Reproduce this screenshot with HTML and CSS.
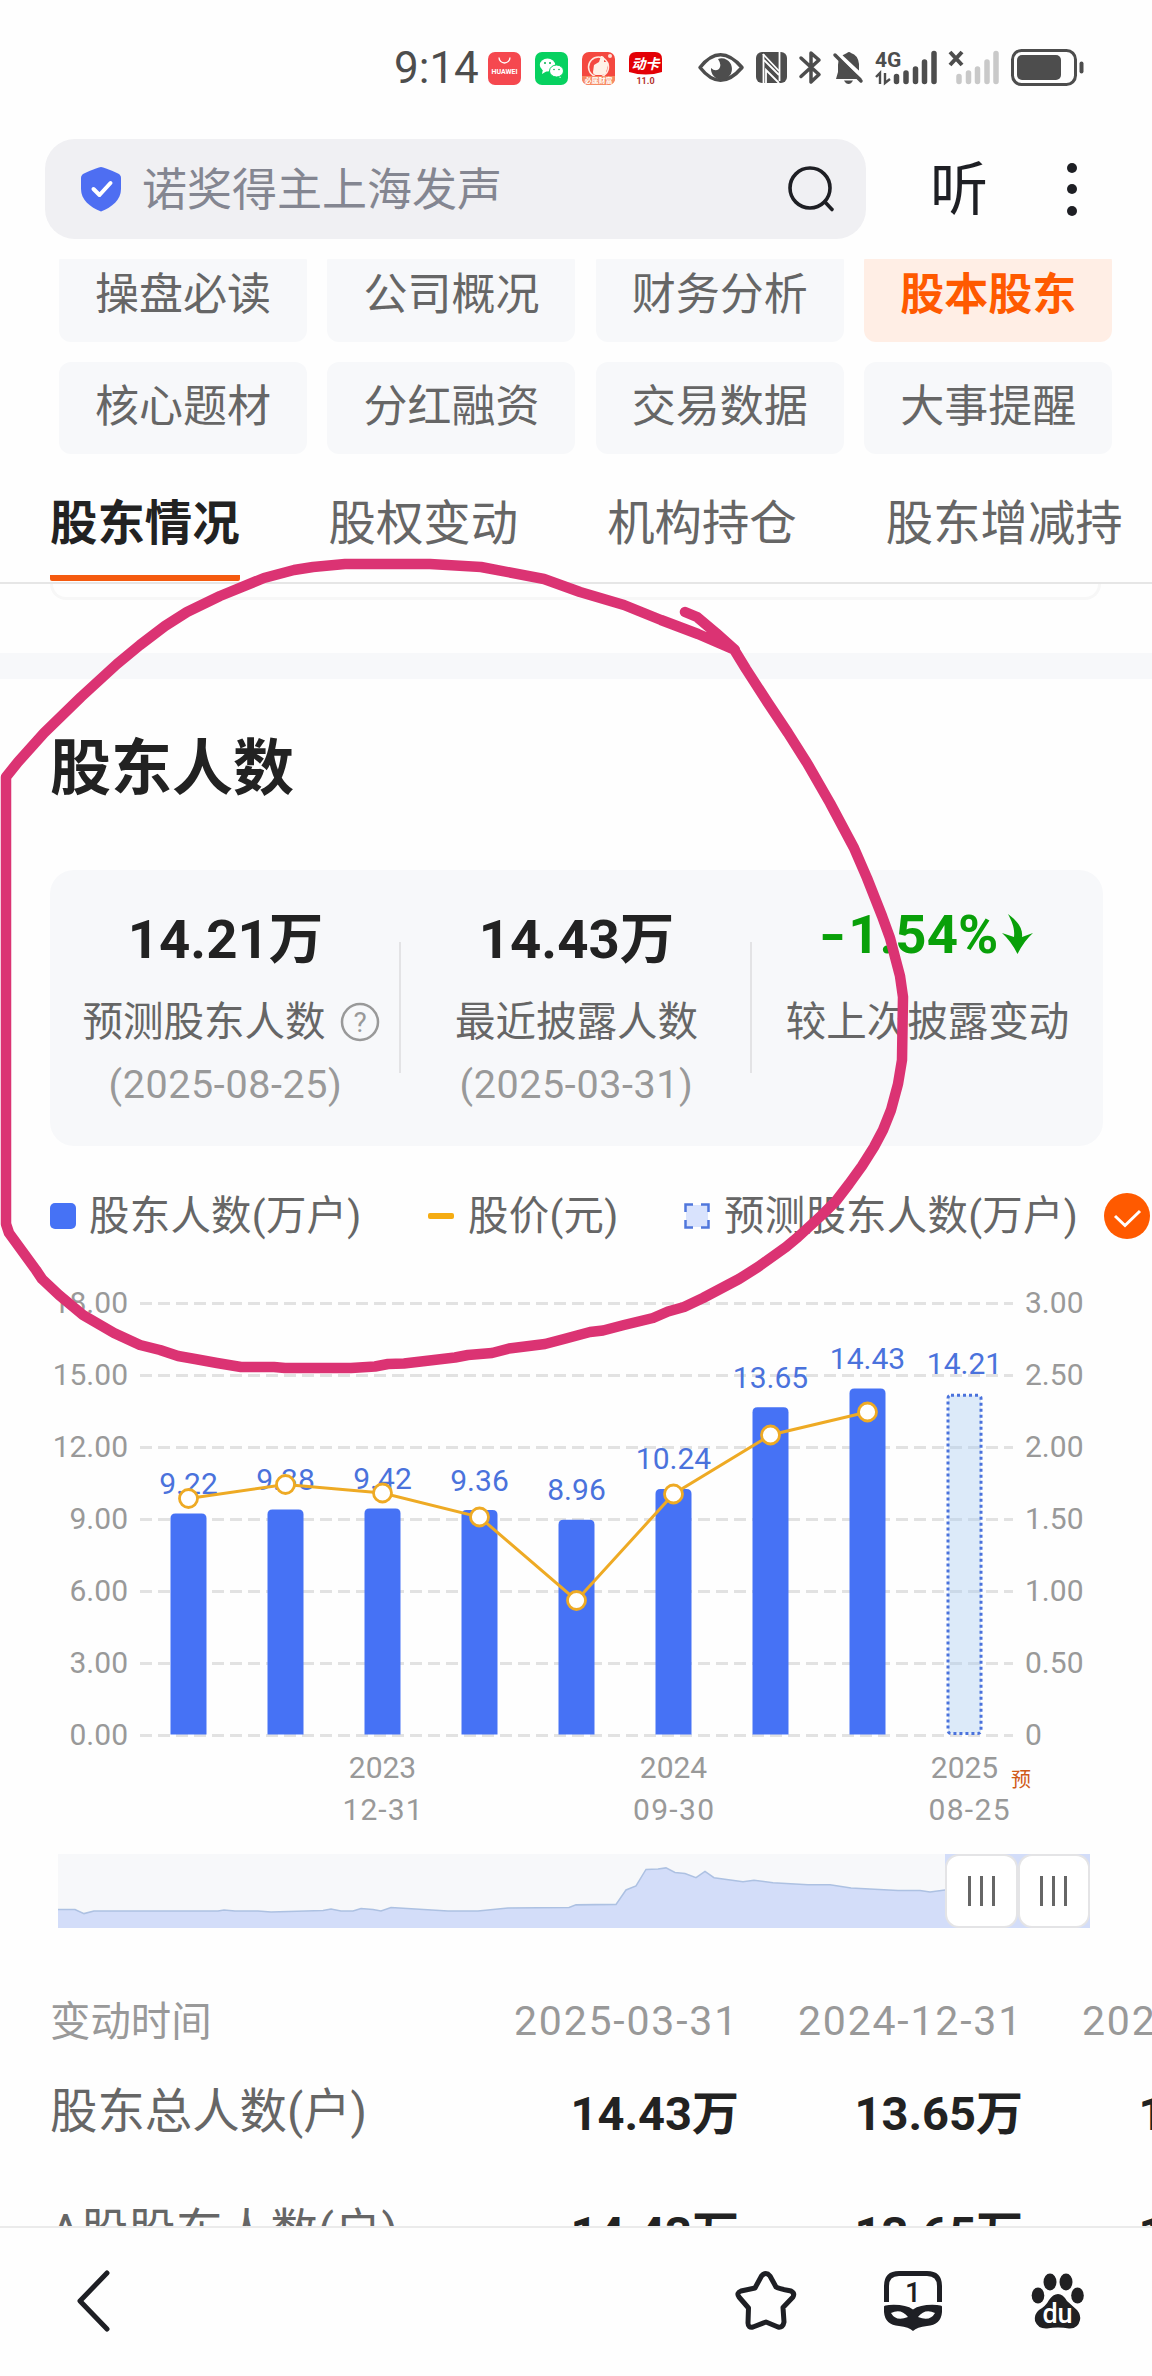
FILE: index.html
```html
<!DOCTYPE html>
<html lang="zh-CN">
<head>
    <meta charset="UTF-8">
    <meta name="viewport" content="width=device-width, initial-scale=1.0">
    <title>股东人数</title>
    <link rel="stylesheet" href="styles.css">
</head>
<body>
    <!-- Status bar -->
    <div class="status-bar">
        <span class="time">9:14</span>
        <svg class="app-icons" viewBox="484 44 184 50" width="184" height="50">
            <rect x="488" y="52" width="33" height="33" rx="7" fill="#f5484f"/>
            <path d="M499 57.500a5.500 5.500 0 0 0 11 0" fill="none" stroke="#fff" stroke-width="1.300"/>
            <text x="504.500" y="73.500" class="app-text" textLength="26">HUAWEI</text>
            <rect x="535" y="52" width="33" height="33" rx="7" fill="#07d160"/>
            <ellipse cx="547.500" cy="65" rx="7.700" ry="6.500" fill="#fff"/>
            <path d="M543 69l-1 5 5-3zM559 74l2 4-5-2z" fill="#fff"/>
            <ellipse cx="556.500" cy="71" rx="7" ry="6" fill="#fff" stroke="#07d160"/>
            <g fill="#07b050"><circle cx="545" cy="63" r="1"/><circle cx="550" cy="63" r="1"/><circle cx="554" cy="69.500" r=".8"/><circle cx="559" cy="69.500" r=".8"/></g>
            <rect x="582" y="52" width="33" height="33" rx="7" fill="#f4483f"/>
            <circle cx="598.500" cy="67" r="10" fill="none" stroke="#ffe9df" stroke-width="1.500"/>
            <path d="M594 65l5-3 2-6q4-1 3 6h3q2 0 1 3l-2 8q-1 2-4 2h-6q-3 0-3-3z" fill="#fff0e6"/>
            <path d="M582 76h33v2q0 7-7 7h-19q-7 0-7-7z" fill="#f68a62"/>
            <text x="598.500" y="83" class="app-text">必属财富</text>
            <circle cx="610" cy="56" r="2" fill="#ffe0d5"/>
            <path d="M629 59q0-7 7-7h19q7 0 7 7v13q-16 5-33 0z" fill="#e30006"/>
            <text x="645.500" y="69" class="app-text card">动卡</text>
            <text x="645.500" y="84" class="app-text ver">11.0</text>
        </svg>
        <svg class="sys-icons" viewBox="694 44 396 50" width="396" height="50">
            <path d="M700 67.500Q720 42 742 67.500Q720 93 700 67.500z" fill="none" stroke="#4d4d4d" stroke-width="3.500" stroke-linejoin="round"/>
            <path d="M718 59a10.500 10.500 0 1 1-7 9q4 4 8 1 3-4-1-10z" fill="#4d4d4d"/>
            <rect x="756" y="52" width="31" height="31" rx="6" fill="#4d4d4d"/>
            <path d="M763.500 83V54M779.500 52v29" fill="none" stroke="#fff" stroke-width="1.800"/>
            <path d="M763 54l16 17M764 60l15 15M766 83V70l13 13" fill="none" stroke="#fff" stroke-width="1.800"/>
            <path d="M801 58l18 16.500-8 7.500V53l8 7-18 16.500" fill="none" stroke="#4d4d4d" stroke-width="3.500" stroke-linejoin="round" stroke-linecap="round"/>
            <path d="M836 79h26l-3-6v-9q-1-9-8-11-2-2-4 0-9 3-9 12v7z" fill="#4d4d4d"/>
            <path d="M844 80.500h9q-2 3.500-4.500 3.500t-4.500-3.500z" fill="#4d4d4d"/>
            <path d="M836 52l29 27" stroke="#fff" stroke-width="4"/>
            <path d="M835 55l26 26" stroke="#4d4d4d" stroke-width="3.500" stroke-linecap="round"/>
            <text x="875" y="66.500" class="net">4G</text>
            <path d="M876 77l4-4v11M885 73v10l5-4" fill="none" stroke="#4d4d4d" stroke-width="2.400"/>
            <path d="M896.500 76.500v5M906 73v8.500M915.500 69v12.500M924.500 62v19.500M934 53.500v28" stroke="#4d4d4d" stroke-width="5.500" stroke-linecap="round"/>
            <path d="M950 52l12 13M962 52l-12 13" stroke="#4d4d4d" stroke-width="4"/>
            <path d="M959 76.500v5M968.500 73v8.500M977.500 69v12.500M987 62v19.500M996 53.500v28" stroke="#c9c9c9" stroke-width="5.500" stroke-linecap="round"/>
            <rect x="1012.500" y="50.500" width="63" height="34" rx="9" fill="none" stroke="#4d4d4d" stroke-width="3"/>
            <rect x="1017" y="55" width="44" height="25" rx="5" fill="#4d4d4d"/>
            <rect x="1079.500" y="61.500" width="4" height="12" rx="2" fill="#4d4d4d"/>
        </svg>
    </div>

    <!-- Search -->
    <div class="top-bar">
        <div class="search-box">
            <svg width="42" height="46" viewBox="0 0 42 46"><path d="M21 1Q24 1 38 7.500Q41 9 41 12V23C41 34 32 41 21 45.500C10 41 1 34 1 23V12Q1 9 4 7.500Q18 1 21 1z" fill="#4e6ef2"/><path d="M13.500 23l6 6 11-12" fill="none" stroke="#fff" stroke-width="4" stroke-linecap="round" stroke-linejoin="round"/></svg>
            <span class="search-text">诺奖得主上海发声</span>
            <svg width="48" height="48" viewBox="0 0 48 48" fill="none" stroke="#1e1f24" stroke-width="3.600" stroke-linecap="round"><circle cx="23" cy="23" r="20"/><path d="M38 37l7 7.500"/></svg>
        </div>
        <span class="listen">听</span>
        <div class="dots"><i></i><i></i><i></i></div>
    </div>

    <div class="content">
        <div class="menu-grid">
            <div class="menu-item">操盘必读</div>
            <div class="menu-item">公司概况</div>
            <div class="menu-item">财务分析</div>
            <div class="menu-item active">股本股东</div>
            <div class="menu-item">核心题材</div>
            <div class="menu-item">分红融资</div>
            <div class="menu-item">交易数据</div>
            <div class="menu-item">大事提醒</div>
        </div>

        <div class="tabs">
            <div class="tab active">股东情况</div>
            <div class="tab">股权变动</div>
            <div class="tab">机构持仓</div>
            <div class="tab">股东增减持</div>
        </div>
        <div class="card-end"></div>
        <div class="band"></div>

        <h2 class="section-title">股东人数</h2>

        <div class="summary">
            <div class="summary-item">
                <div class="value">14.21万</div>
                <div class="label with-help"><span>预测股东人数</span>
                    <svg width="40" height="40" viewBox="0 0 40 40"><circle cx="20" cy="20" r="18" fill="none" stroke="#999" stroke-width="2.500"/><text x="20" y="30" class="question">?</text></svg>
                </div>
                <div class="date">(2025-08-25)</div>
            </div>
            <div class="summary-item">
                <div class="value">14.43万</div>
                <div class="label"><span>最近披露人数</span></div>
                <div class="date">(2025-03-31)</div>
            </div>
            <div class="summary-item">
                <div class="value down"><span class="minus">-</span>1.54%<svg width="31" height="40" viewBox="0 0 31 40"><path d="M6 0C17 8 21 16 20 23L31 19Q22 27 15.500 40Q9 27 0 19L12 23C13 14 10 8 6 0z" fill="#09a009"/></svg></div>
                <div class="label"><span>较上次披露变动</span></div>
            </div>
        </div>

        <div class="legend">
            <i class="mark-bar"></i><span class="name-bar">股东人数(万户)</span>
            <i class="mark-line"></i><span class="name-line">股价(元)</span>
            <svg width="26" height="26" viewBox="0 0 26 26"><rect x="2" y="2" width="22" height="22" fill="#d9e3fd"/><path d="M1.500 9V1.500H9M17 1.500h7.500V9M24.500 17v7.500H17M9 24.500H1.500V17" fill="none" stroke="#5077dc" stroke-width="2.500"/></svg>
            <span class="name-pred">预测股东人数(万户)</span>
            <svg width="46" height="46" viewBox="0 0 46 46"><circle cx="23" cy="23" r="23" fill="#ff5a00"/><path d="M11 23l10 9.500 15-14.500" fill="none" stroke="#fff" stroke-width="3"/></svg>
        </div>

        <svg class="chart" viewBox="0 1247 1152 593" width="1152" height="593">
            <g id="grid" class="grid"></g>
            <g id="axis" class="axis"></g>
            <g id="bars"></g>
            <g id="line"></g>
            <g class="axis mid">
                <text x="382.500" y="1778">2023</text><text x="382.500" y="1820" textLength="80">12-31</text>
                <text x="673.500" y="1778">2024</text><text x="673.500" y="1820" textLength="81">09-30</text>
                <text x="964.500" y="1778">2025</text><text x="969" y="1820" textLength="81">08-25</text>
            </g>
            <text x="1011" y="1786.500" class="forecast">预</text>
        </svg>

        <div class="range">
            <svg viewBox="0 0 887 72" width="887" height="74" preserveAspectRatio="none">
                <path class="range-area" d="M-2 54H17L26 58L36 55.500H160L166 54.500L177 55.500H200L213 56.500L265 55L273 53.500L283 55.500H295L303 53L315 54L323 55.500L333 52L390 55.500H420L450 52.500L511 52L518 49.500L558 49L568 35L578 31L588 15L600 14.500L608 13.500L617 18L627 19L638 23L647 17L656 23L685 27L696 25.500L715 28L750 30L772 30L793 33L840 35.500L862 35.500L872 37L887 35H900V74H-2z"/>
            </svg>
            <div class="handle"><i></i><i></i><i></i></div>
            <div class="handle"><i></i><i></i><i></i></div>
        </div>

        <div class="table">
            <div class="row head"><span class="name">变动时间</span><span>2025-03-31</span><span>2024-12-31</span><span>2024-09-30</span></div>
            <div class="row"><span class="name">股东总人数(户)</span><span>14.43万</span><span>13.65万</span><span>10.24万</span></div>
            <div class="row last"><span class="name">A股股东人数(户)</span><span>14.43万</span><span>13.65万</span><span>10.24万</span></div>
        </div>
    </div>

    <!-- Bottom toolbar -->
    <div class="bottom-bar">
        <svg class="back" width="36" height="64" viewBox="0 0 36 64"><path d="M32 4L5 32l27 28" fill="none" stroke="#1e1f24" stroke-width="5" stroke-linecap="round" stroke-linejoin="round"/></svg>
        <svg class="star" width="62" height="60" viewBox="0 0 62 60"><path d="M26.500 5Q31 0 35 5L41 16Q43 17.500 56 20Q60 22 58 26L48 36.500L49 51Q48 57 43 56L31 51L18 56Q13 57 13 52L13.500 37L4 26Q1 22 6 20L20 17z" fill="none" stroke="#1e1f24" stroke-width="5" stroke-linejoin="round"/></svg>
        <svg class="windows" width="60" height="62" viewBox="0 0 60 62"><path d="M3.500 32V16Q3.500 3.500 16 3.500H44Q56.500 3.500 56.500 16V32" fill="none" stroke="#1e1f24" stroke-width="5"/><text x="30" y="32" class="tab-count">1</text><path fill-rule="evenodd" d="M1 36.500Q2 35 6 35Q22 34 30 39.500Q38 34 54 35Q58 35 59 36.500V42Q58 55 44 56Q34 57 30 61Q26 57 16 56Q2 55 1 42zM8 43Q18 38 25 47Q13 52 8 43zM52 43Q42 38 35 47Q47 52 52 43z" fill="#1e1f24"/></svg>
        <svg width="54" height="58" viewBox="0 0 54 58" fill="#202022"><ellipse cx="19" cy="10" rx="6.500" ry="8.500"/><ellipse cx="35" cy="10" rx="6.500" ry="8.500"/><ellipse cx="7" cy="23.500" rx="6.300" ry="8"/><ellipse cx="46.500" cy="23.500" rx="6.300" ry="8"/><path d="M27 22Q32 22 36 29L46 38Q50 43 49 48Q47 57 38 56.500Q27 54.500 16 56.500Q7 57 4 49Q3 42 8 38Q15 34 18 28Q22 22 27 22z"/><text x="26.500" y="51" class="du">du</text></svg>
    </div>

    <!-- Hand-drawn mark -->
    <svg class="mark" viewBox="0 0 1152 2376" width="1152" height="2376">
        <path d="M685 612L697 617L716 633L735 650L698 634L661 620L624 605L580 592L544 579L481 567L430 564H345L313 567L294 570L264 578L220 596L187 612L165 626L140 645L117 664L81 697L44 733L18 762L6 777V1224L9 1233L36 1270L42 1279L59 1295L83 1315L114 1333L140 1345L160 1350L178 1356L195 1359L217 1363L241 1367H274L285 1368H351L375 1366.500L388 1364L404 1363.500L455 1357.500L468 1355L492 1353L509 1348.500L545 1344L564 1339L590 1332L603 1330.500L624 1325L653 1318L668 1311.500L684 1307L703 1298L739 1279L758 1267L786 1247L798 1237L823 1214L836 1201L849 1184L862 1166L874 1147L883 1130L891 1110L898 1084L902 1060L903 997L900 976L895 957L890 938L882 916L867 878L854 848L830 803L807 763L788 733L768 703L746 669L735 651"/>
    </svg>

    <script>
        const centers = [188.5, 285.5, 382.5, 479.5, 576.5, 673.5, 770.5, 867.5, 964.5];
        const holders = [9.22, 9.38, 9.42, 9.36, 8.96, 10.24, 13.65, 14.43, 14.21];
        const linePoints = [1498.5, 1484.5, 1493, 1517, 1600.5, 1494, 1435, 1412];
        const rightAxis = ['0', '0.50', '1.00', '1.50', '2.00', '2.50', '3.00'];

        let grid = '';
        let axis = '';
        rightAxis.forEach((label, i) => {
            const y = 1735.5 - i * 72;
            grid += `<line x1="140" x2="1013" y1="${y}" y2="${y}"/>`;
            axis += `<text x="128" y="${y + 9.5}" text-anchor="end">${(i * 3).toFixed(2)}</text>`;
            axis += `<text x="1025" y="${y + 9.5}">${label}</text>`;
        });
        document.getElementById('grid').innerHTML = grid;
        document.getElementById('axis').innerHTML = axis;

        let bars = '';
        holders.forEach((value, i) => {
            const x = centers[i] - 18;
            const top = 1734.5 - value * 23.98;
            if (i === holders.length - 1) {
                bars += `<rect class="bar-pred" x="${x + 1.5}" y="${top + 1.5}" width="33" height="${1732 - top}" rx="3"/>`;
            } else {
                bars += `<path class="bar" d="M${x} 1734.5V${top + 5}q0-5 5-5h26q5 0 5 5V1734.5z"/>`;
            }
            bars += `<text class="bar-label" x="${centers[i]}" y="${top - 19.5}">${value.toFixed(2)}</text>`;
        });
        document.getElementById('bars').innerHTML = bars;

        let line = `<polyline class="price" points="${linePoints.map((y, i) => centers[i] + ',' + y).join(' ')}"/>`;
        linePoints.forEach((y, i) => {
            line += `<circle class="price-dot" cx="${centers[i]}" cy="${y}" r="9"/>`;
        });
        document.getElementById('line').innerHTML = line;
    </script>
</body>
</html>
```
FILE: styles.css
```css
* {
    box-sizing: border-box;
}

body {
    margin: 0;
    width: 1152px;
    height: 2376px;
    overflow: hidden;
    position: relative;
    display: flex;
    flex-direction: column;
    background-color: #fefefe;
    color: #222;
    font-family: Roboto, "Noto Sans CJK SC", sans-serif;
}

svg {
    display: block;
    flex: none;
}

/* Status bar */
.status-bar {
    height: 139px;
    padding: 44px 0 0 394px;
    display: flex;
    align-items: flex-start;
}

.time {
    width: 90px;
    font-size: 44px;
    line-height: 49px;
    color: #4d4d4d;
}

.sys-icons {
    margin-left: 26px;
}

.app-text {
    font-size: 7px;
    font-weight: 700;
    fill: #fff;
    text-anchor: middle;
}

.app-text.card {
    font-size: 14px;
    font-style: italic;
}

.app-text.ver {
    font-size: 9px;
    fill: #b3332f;
}

.net {
    font-size: 21px;
    font-weight: 700;
    fill: #4d4d4d;
}

/* Search */
.top-bar {
    height: 120px;
    padding-left: 45px;
    display: flex;
    align-items: flex-start;
}

.search-box {
    width: 821px;
    height: 100px;
    padding: 0 31px 0 35px;
    display: flex;
    align-items: center;
    border-radius: 30px;
    background-color: #f0f0f3;
}

.search-text {
    flex: 1;
    padding: 3px 0 0 20px;
    font-size: 45px;
    line-height: 60px;
    color: #848691;
}

.listen {
    width: 58px;
    margin-left: 64px;
    font-size: 58px;
    line-height: 102px;
    color: #1e1f24;
}

.dots {
    height: 100px;
    margin-left: 79px;
    display: flex;
    flex-direction: column;
    justify-content: center;
    gap: 11.5px;
}

.dots i {
    width: 10px;
    height: 10px;
    border-radius: 50%;
    background-color: #1e1f24;
}

.content {
    height: 1967px;
    overflow: hidden;
}

/* Menu */
.menu-grid {
    margin: -9px 39px 0 59px;
    display: grid;
    grid-template-columns: repeat(4, 248px);
    grid-auto-rows: 92px;
    gap: 20px 20.4px;
}

.menu-item {
    border-radius: 12px;
    background-color: #f7f8fa;
    color: #666;
    font-size: 44px;
    line-height: 90px;
    text-align: center;
}

.menu-item.active {
    background-color: #ffeee5;
    color: #ff5a00;
    font-weight: 700;
}

/* Tabs */
.tabs {
    height: 130px;
    padding: 35px 0 0 50px;
    display: flex;
    gap: 89px;
    border-bottom: 2px solid #e6e6e6;
}

.tab {
    flex: none;
    height: 92px;
    font-size: 47.4px;
    line-height: 70px;
    color: #666;
}

.tab.active {
    border-bottom: 6px solid #f55a0f;
    border-radius: 2px;
    color: #222;
    font-weight: 700;
}

.card-end {
    height: 16px;
    margin: 0 51px 53px 50px;
    border: 3px solid #f7f7f7;
    border-top: none;
    border-radius: 0 0 20px 20px;
}

.band {
    height: 26px;
    background-color: #f7f8fa;
}

.section-title {
    margin: 0;
    height: 191px;
    padding: 50px 0 0 50px;
    font-size: 61px;
    line-height: 80px;
    font-weight: 700;
}

/* Summary */
.summary {
    width: 1053px;
    height: 276px;
    margin-left: 50px;
    padding-top: 31px;
    display: grid;
    grid-template-columns: repeat(3, 351px);
    border-radius: 24px;
    background-color: #f7f8fa;
}

.summary-item {
    position: relative;
    text-align: center;
}

.summary-item + .summary-item::before {
    content: "";
    position: absolute;
    left: -2px;
    top: 41px;
    width: 1.5px;
    height: 131px;
    background-color: #e3e3e5;
}

.value {
    display: flex;
    justify-content: center;
    align-items: center;
    height: 66px;
    font-size: 54.5px;
    font-weight: 700;
}

.value.down {
    color: #09a009;
}

.minus {
    margin-right: 5px;
    transform: scaleX(1.3);
}

.value svg {
    margin-left: 4px;
}

.label {
    display: flex;
    justify-content: center;
    align-items: center;
    gap: 14px;
    height: 60px;
    margin-top: 25px;
    font-size: 40.5px;
    white-space: nowrap;
    color: #666;
}

.label span {
    padding-bottom: 8px;
}

.with-help {
    padding-left: 11px;
}

.question {
    font-size: 28px;
    fill: #999;
    text-anchor: middle;
}

.date {
    font-size: 39.5px;
    line-height: 60px;
    margin-top: 3px;
    letter-spacing: 0.6px;
    color: #999;
}

/* Legend */
.legend {
    height: 62px;
    margin-top: 39px;
    padding-left: 50px;
    display: flex;
    align-items: center;
    font-size: 40.4px;
    line-height: 60px;
    letter-spacing: 0.3px;
    white-space: nowrap;
    color: #666;
}

.legend span {
    flex: none;
    padding-top: 2px;
}

.mark-bar {
    width: 26px;
    height: 26px;
    border-radius: 5px;
    background-color: #4672f5;
}

.mark-line {
    width: 26px;
    height: 6px;
    border-radius: 2px;
    background-color: #f5ac13;
}

.name-bar {
    width: 339px;
    padding-left: 13px;
    margin-right: 13px;
}

.name-line {
    width: 230px;
    padding-left: 14px;
}

.name-pred {
    width: 394px;
    padding-left: 14px;
}

/* Chart */
.grid {
    stroke: #e2e2e2;
    stroke-width: 2.8;
    stroke-dasharray: 12 6;
}

.axis {
    font-size: 30px;
    fill: #999;
}

.mid {
    text-anchor: middle;
}

.bar {
    fill: #4672f5;
}

.bar-pred {
    fill: rgba(170, 205, 242, 0.4);
    stroke: #4a72dc;
    stroke-width: 3;
    stroke-dasharray: 3 3;
}

.bar-label {
    font-size: 30px;
    fill: #4a72dc;
    text-anchor: middle;
}

.price {
    fill: none;
    stroke: #eeaa24;
    stroke-width: 3;
}

.price-dot {
    fill: #fff;
    stroke: #eeaa24;
    stroke-width: 2.8;
}

.forecast {
    font-size: 20px;
    fill: #d05a18;
}

/* Range slider */
.range {
    width: 1032px;
    height: 74px;
    margin: 14px 0 0 58px;
    display: flex;
    background-color: #d3ddf9;
}

.range svg {
    background-color: #f7f8fa;
}

.range-area {
    fill: #d3ddf9;
    stroke: #adc1e2;
    stroke-width: 1.5;
}

.handle {
    width: 73px;
    height: 74px;
    display: flex;
    justify-content: center;
    align-items: center;
    gap: 9px;
    border: 2px solid #e4e4e6;
    border-radius: 14px;
    background-color: #fff;
}

.handle i {
    width: 3px;
    height: 30px;
    background-color: #666;
}

/* Table */
.table {
    width: 1400px;
    margin-top: 53px;
    padding-left: 50px;
}

.row {
    display: flex;
    align-items: center;
    height: 96px;
    font-size: 47px;
    font-weight: 700;
    white-space: nowrap;
}

.row span {
    width: 284px;
    text-align: right;
}

.row .name {
    width: 405px;
    padding-bottom: 4px;
    text-align: left;
    font-size: 47.4px;
    font-weight: 400;
    letter-spacing: 0;
    color: #666;
}

.row.head {
    height: 80px;
    padding-left: 2px;
    font-size: 41px;
    font-weight: 400;
    letter-spacing: 1.8px;
    color: #999;
}

.row.head .name {
    margin-left: -2px;
    padding-bottom: 5px;
    font-size: 40.4px;
    color: #999;
}

.row.last {
    height: 144px;
}

/* Bottom toolbar */
.bottom-bar {
    height: 150px;
    padding: 0 67px 2px 75px;
    display: flex;
    align-items: center;
    border-top: 2px solid #ebebeb;
}

.back {
    margin-right: auto;
}

.star {
    margin-right: 86px;
}

.windows {
    margin-right: 88px;
}

.tab-count {
    font-size: 28px;
    font-weight: 500;
    fill: #1e1f24;
    text-anchor: middle;
}

.du {
    font-size: 27px;
    font-weight: 500;
    fill: #fff;
    text-anchor: middle;
}

/* Hand-drawn mark */
.mark {
    position: absolute;
    left: 0;
    top: 0;
    pointer-events: none;
}

.mark path {
    fill: none;
    stroke: #db3373;
    stroke-width: 10.5;
    stroke-linecap: round;
    stroke-linejoin: round;
}
```
